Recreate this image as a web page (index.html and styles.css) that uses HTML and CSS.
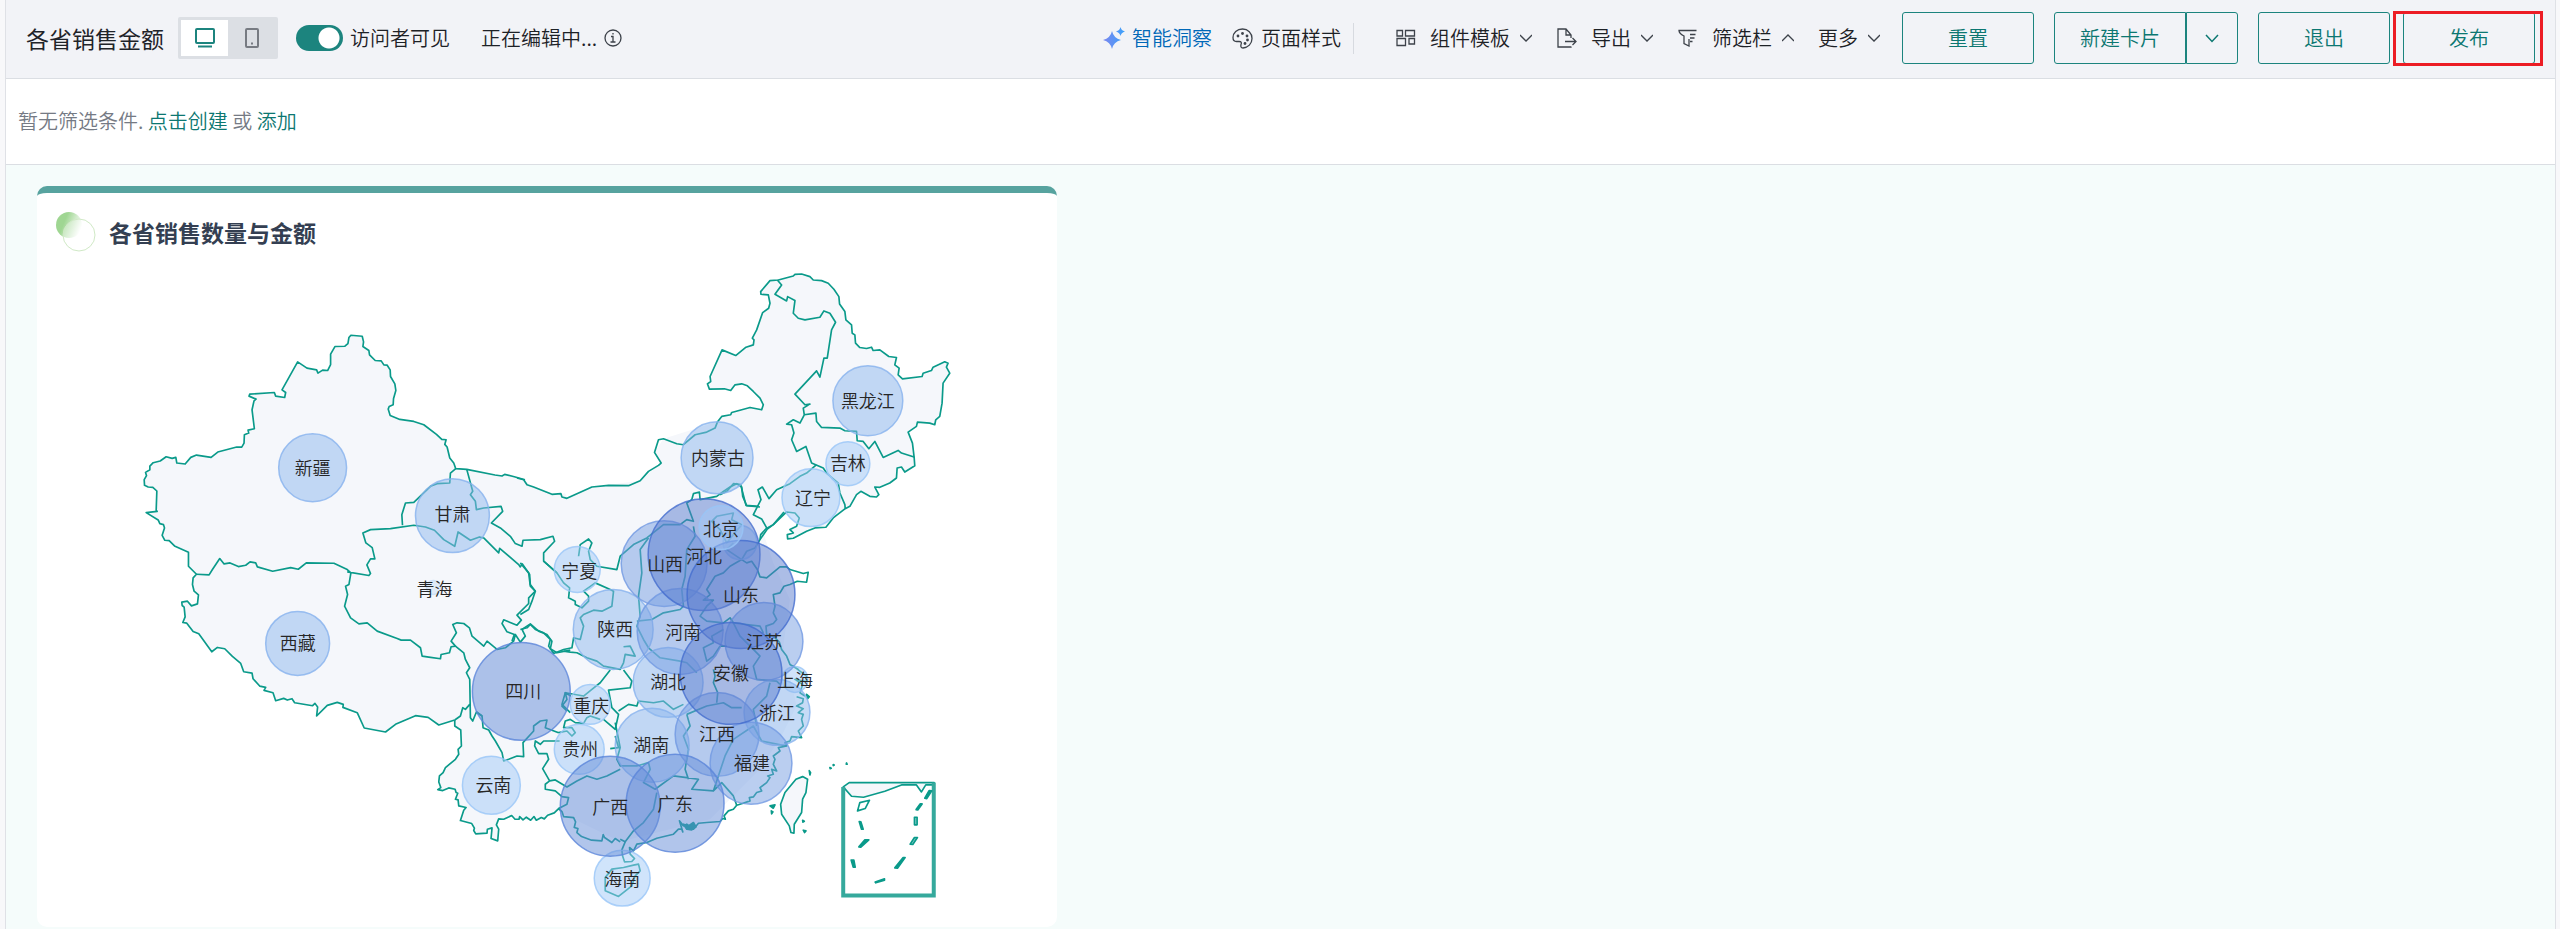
FILE: index.html
```html
<!DOCTYPE html>
<html lang="zh-CN">
<head>
<meta charset="utf-8">
<title>各省销售金额</title>
<link rel="stylesheet" href="styles.css">
</head>
<body>
<div class="page">
  <header class="topbar">
    <h1 class="page-title">各省销售金额</h1>
    <div class="device-switch">
      <button class="device device-active" type="button" aria-label="桌面端">
        <svg width="20" height="20" viewBox="0 0 20 20"><rect x="1" y="1" width="18" height="14" rx="1"/><path d="M3 18.500H17"/></svg>
      </button>
      <button class="device" type="button" aria-label="移动端">
        <svg width="20" height="20" viewBox="0 0 20 20"><rect x="4" y="1" width="12" height="18" rx="1"/><path d="M9 15.500H11"/></svg>
      </button>
    </div>
    <label class="visible-toggle"><input class="switch" type="checkbox" checked><span>访问者可见</span></label>
    <div class="editing"><span>正在编辑中...</span>
      <svg class="icon" width="18" height="18" viewBox="0 0 18 18"><circle cx="9" cy="9" r="8"/><path d="M7 7.500H9V13M6.500 13H11.500M9 4V5.500"/></svg>
    </div>
    <nav class="tools">
      <button class="tool tool-smart" type="button">
        <svg width="22" height="22" viewBox="0 0 22 22"><defs><linearGradient id="spark" x1="0" x2="1"><stop offset="0" stop-color="#7c86ee"/><stop offset="1" stop-color="#3ba2fb"/></linearGradient></defs><path fill="url(#spark)" d="M9 4Q10.500 11 18 13Q10.500 15 9 22Q7.500 15 0 13Q7.500 11 9 4ZM17.500 0Q18.200 3.500 22 4.500Q18.200 5.500 17.500 9Q16.800 5.500 13 4.500Q16.800 3.500 17.500 0Z"/></svg>
        <span>智能洞察</span>
      </button>
      <button class="tool tool-style" type="button">
        <svg class="icon" width="21" height="21" viewBox="0 0 21 21"><path d="M11 20C16 19.500 20 16 20 10.500C20 5 16 1 10.500 1C5 1 1 5 1 9.500C1 12 2.500 13.500 4.500 13.500H7C9.500 13.500 9.800 14.500 9 16.500C8.500 18.500 9 20 11 20Z"/><g class="dots"><circle cx="6" cy="8" r="1.400"/><circle cx="10.500" cy="5.500" r="1.400"/><circle cx="15" cy="8" r="1.400"/><circle cx="15.500" cy="12" r="1.400"/><circle cx="13" cy="15.500" r="1.400"/></g></svg>
        <span>页面样式</span>
      </button>
      <i class="divider"></i>
      <button class="tool" type="button">
        <svg class="icon icon-wide" width="20" height="18" viewBox="0 0 20 18"><path d="M1 1.500H6.500V7H1ZM9.500 1.500H18.500V7H9.500ZM1 9.500H9.500V16.500H1ZM13 9.500H18.500V15H13Z"/></svg>
        <span>组件模板</span>
        <svg class="icon chevron" width="12" height="8" viewBox="0 0 12 8"><path d="M0 1L6 7L12 1"/></svg>
      </button>
      <button class="tool" type="button">
        <svg class="icon icon-wide" width="20" height="20" viewBox="0 0 20 20"><path d="M14 18.500V19H1V1H9L14 7V10M9 1V7H14M8 13.500H19M15.500 10L19 13.500L15.500 17"/></svg>
        <span>导出</span>
        <svg class="icon chevron" width="12" height="8" viewBox="0 0 12 8"><path d="M0 1L6 7L12 1"/></svg>
      </button>
      <button class="tool" type="button">
        <svg class="icon icon-wide" width="20" height="18" viewBox="0 0 20 18"><path d="M18.500 1.500H1Q1 4.500 6 7V14.500L11 17V10M12 5.500H17.500M12 9H16.500M12 12.500H14.500"/></svg>
        <span>筛选栏</span>
        <svg class="icon chevron" width="12" height="8" viewBox="0 0 12 8"><path d="M0 7L6 1L12 7"/></svg>
      </button>
      <button class="tool" type="button">
        <span>更多</span>
        <svg class="icon chevron" width="12" height="8" viewBox="0 0 12 8"><path d="M0 1L6 7L12 1"/></svg>
      </button>
    </nav>
    <div class="actions">
      <button class="btn" type="button">重置</button>
      <div class="split">
        <button class="btn btn-main" type="button">新建卡片</button>
        <button class="btn btn-drop" type="button" aria-label="展开"><svg width="14" height="9" viewBox="0 0 14 9"><path d="M1 1L7 7.500L13 1"/></svg></button>
      </div>
      <button class="btn" type="button">退出</button>
      <div class="publish"><button class="btn" type="button">发布</button></div>
    </div>
  </header>
  <section class="filters">暂无筛选条件. <a href="#create">点击创建</a> 或 <a href="#add">添加</a></section>
  <main class="canvas">
    <article class="card">
      <div class="card-head">
        <svg width="40" height="42" viewBox="0 0 40 42"><defs><linearGradient id="leaf" x1="0" y1="0.300" x2="1" y2="0.700"><stop offset="0.300" stop-color="#9fd692"/><stop offset="0.950" stop-color="#fff"/></linearGradient></defs><circle cx="13" cy="14" r="13" fill="url(#leaf)"/><circle cx="23" cy="24" r="16" fill="#fff" fill-opacity="0.350" stroke="#d0e9c6"/></svg>
        <h2>各省销售数量与金额</h2>
      </div>
      <svg class="map" viewBox="36 256 1021 672" role="img" aria-label="各省销售数量与金额">
        <g transform="scale(0.333333)">
          <g class="land">
            <g transform="translate(390 960)">
              <path d="M1320 533L1310 532 1304 520 1293 525 1262 523 1198 497 1184 480 1152 471 1123 464 1115 469 1094 466 1009 449 976 447 970 430 958 415 950 382 943 374 947 360 934 359 918 344 880 315 850 305 808 299 779 287 773 268 776 260 788 255 789 237 796 212 793 192 780 170 779 150 770 136 760 135 752 123 734 122 717 105 715 92 697 80 699 66 695 49 661 46 655 53 652 71 643 79 613 80 600 103 600 134 591 152 576 151 562 160 558 150 529 145 501 126 454 210 465 218 462 233 435 229 431 218 357 223 355 229 376 238 364 270 371 327 352 331 354 340 341 345 340 370 333 382 318 382 261 397 241 413 197 406 180 413 163 433 138 430 135 413 124 416 106 411 88 424 67 429 57 439 57 450 44 458 47 468 40 480 41 497 52 502 66 503 78 514 76 572 79 575 46 579 82 601 87 612 98 615 101 625 94 647 102 662 115 663 131 679 173 698 173 740 197 764 187 775 185 795 190 815 203 826 200 853 182 859 170 845 153 848 154 858 160 863 163 892 156 909 168 911 187 936 204 943 243 997 260 984 282 988 305 1011 330 1032 339 1057 364 1061 367 1078 387 1100 405 1104 400 1113 427 1120 435 1144 459 1137 470 1142 484 1138 492 1150 546 1159 553 1152 561 1163 558 1190 590 1158 620 1149 638 1155 637 1164 680 1180 701 1226 765 1238 795 1215 855 1189 893 1194 925 1217 973 1202 1300 1100 1600 900 1600 533Z"/>
              <path d="M1310 536L1385 502 1530 483 1593 430 1573 398 1600 357 1760 307 1870 310 1960 560 1900 640 1930 730 1980 840 1960 980 2000 1160 1950 1260 1880 1360 1740 1500 1470 1568 1290 1480 973 1202 1000 900Z"/>
            </g>
            <path transform="translate(1260 1800)" d="M103 362L103 380 121 392 123 440 113 450 115 465 105 480 75 505 68 520 57 530 55 548 61 565 52 571 67 574 85 566 104 570 107 580 105 600 113 602 115 620 137 625 120 664 154 673 162 687 166 704 200 702 201 690 215 686 212 718 232 725 235 690 228 677 235 659 250 660 274 649 284 660 308 662 331 663 348 663 372 659 402 641 415 628 600 500Z"/>
            <path transform="translate(2070 780)" d="M232 805L250 795 290 757 315 760 328 775 320 800 300 810 310 820 292 825 293 838 310 836 350 815 375 805 408 803 430 775 466 747 480 740 500 705 513 695 540 710 560 712 567 705 555 682 570 683 600 670 620 655 622 625 635 622 645 637 675 618 673 592 668 550 655 517 680 500 683 487 720 490 735 495 738 480 750 470 757 430 760 370 780 340 770 322 775 310 765 306 730 322 725 332 700 340 697 350 638 357 625 345 628 325 615 315 620 293 597 290 570 270 550 272 545 262 530 266 510 263 497 250 495 225 487 220 485 195 468 180 465 155 449 132 447 110 432 88 415 70 395 62 370 60 360 50 335 42 315 43 310 48 265 60 240 62 212 95 213 103 235 105 240 130 236 145 218 158 200 210 187 235 192 240 190 255 168 262 137 287 96 270 60 350 62 365 52 372 58 388 103 387 122 392 135 375 155 372 172 378 190 395 210 415 220 435 215 450 180 443 125 458 122 465 95 470 82 487 70 515 15 525 -20 555 0 720 150 900Z"/>
          </g>
          <g class="edge">
            <g transform="translate(390 960)">
              <path d="M1184 480L1152 471 1123 464 1115 469 1094 466 1009 449 976 447 970 430 958 415 950 382 943 374 947 360 934 359 918 344 880 315 850 305 808 299 779 287 773 268 776 260 788 255 789 237 796 212 793 192 780 170 779 150 770 136 760 135 752 123 734 122 717 105 715 92 697 80 699 66 695 49 661 46 655 53 652 71 643 79 613 80 600 103 600 134 591 152 576 151 562 160 558 150 529 145 501 126 454 210 465 218 462 233 435 229 431 218 357 223 355 229 376 238 370 243 364 270 371 327 352 331 354 340 341 345 340 370 333 382 318 382 261 397 241 413 197 406 180 413 163 433 138 430 135 413 124 416 106 411 88 424 67 429 57 439 57 450 44 458 47 468 40 480 41 497 52 502 66 503 78 514 76 572 79 575 46 579 82 601 87 612 98 615 101 625 94 647 102 662 115 663 131 679 173 698 173 740 197 764 187 775 185 795 190 815 203 826 200 853 182 859 170 845 153 848 154 858 160 863 163 892 156 909 168 911 187 936 204 943 243 997 260 984 282 988 305 1011 330 1032 339 1057 364 1061 367 1078 387 1100 405 1104 400 1113 427 1120 435 1144 459 1137 470 1142 484 1138 492 1150 546 1159 553 1152 561 1163 558 1190 590 1158 620 1149 638 1155 637 1164 680 1180 701 1226 765 1238 795 1215 855 1189 893 1194 925 1217 973 1202"/>
              <path d="M197 764L235 766 245 750 267 717 280 733 298 730 323 741 345 737 358 727 375 730 380 742 426 755 480 744 503 749 527 730 610 731 650 750 661 760M650 757L715 768 720 762 709 736 720 718 733 718 725 684 706 670 697 640 720 630 780 627 850 617 885 622 912 632 940 660 973 680 983 637 1020 662 1047 652 1060 655 1105 700 1108 686 1165 735 1170 742 1176 733 1198 765 1200 795 1215 815 1195 835 1195 852 1160 887 1173 902 1160 917 1120 901 1115 912 1130 937 1152 945 1145 965"/>
              <path d="M816 617L814 585 825 550 850 548 900 500 920 492 958 490 960 460 976 447M1009 449L1027 515 1020 525 1035 545 1038 570 1060 565 1112 560 1117 575 1083 610 1110 625 1140 650 1155 672 1175 680 1178 662 1230 660 1268 650 1273 665 1240 700 1240 725 1280 760"/>
              <path d="M661 760L655 795 645 800 651 825 642 860 660 895 685 913 710 910 740 935 800 957 812 962 840 962 870 985 875 1010 895 1013 930 1018 932 1005 957 1000 962 982 975 980 962 965 978 940 967 915 980 910 1000 912 1017 925 1025 950 1060 980 1070 965 1100 990 1125 985 1150 965 1155 945 1170 968 1185 950 1175 930 1200 913 1225 935 1250 945 1265 965 1260 988 1280 1000 1320 992"/>
              <path d="M975 980L1000 1000 1005 1020 1018 1045 1008 1060 1018 1080 1020 1195 1027 1205 1038 1178 1055 1190M1018 1155L1005 1170 997 1165 990 1190 973 1202"/>
            </g>
            <g transform="translate(1260 1800)">
              <path d="M103 362L103 380 121 392 123 440 113 450 115 465 105 480 75 505 68 520 57 530 55 548 61 565 52 571 67 574 85 566 104 570 107 580 112 582 105 600 113 602 115 620 137 625 130 633 120 664 154 673 162 687 160 694 166 704 200 702 201 690 215 686 212 718 232 725 235 690 228 677 235 659 250 660 274 649 284 660 296 660 298 652 308 662 318 654 331 663 341 652 348 663 363 655 372 659 382 648 402 641 415 628 425 637 430 652 460 655 466 668 462 685 473 688 470 700 484 712 514 723 545 725 549 706 553 715 575 730 585 718 600 728"/>
              <path d="M168 338L185 350 188 385 205 392 215 410 225 425 245 460 250 485 265 480 290 470 310 472 308 430 340 395 340 380 360 365 380 362 375 385 415 400M452 290L435 280 440 300 425 320 440 335M415 400L440 395 455 410 465 400 455 385 430 385 435 365 450 360 465 370 490 372 500 355 510 350 540 360M418 425L370 425 360 435 345 425 343 440 355 463 380 463 385 480 367 508 388 545 375 555 375 570 405 575 425 592 445 595 440 615 415 628M388 545L405 542 440 563 470 545 500 530 530 540 560 530 600 510"/>
            </g>
            <g transform="translate(1560 1200)">
              <path d="M592 67L585 85 560 97 525 105 490 135 470 132 430 117 415 120 403 158 423 190 415 197 385 215 360 243 325 258 265 257 215 262 140 296 125 292 122 282 95 284 40 262 20 255 10 240 -10 235"/>
              <path d="M70 485L110 520 130 550 148 565 145 595 165 605 165 615 185 625 205 605 205 590 190 575 225 550 270 570 280 575 275 620 245 635 220 632 190 645 180 655 190 680 180 720 160 715 155 745 130 750 100 762 85 740 90 720 70 700 45 690 30 675 20 685 0 690M175 470L180 435 205 418 215 430 205 455 210 480 230 500 290 510 300 470 340 435 380 415 430 375 480 375 500 360 520 365 500 310 515 300 520 282 538 277 540 300 590 290 610 275 630 262 650 252 665 262 668 290 680 318 720 322"/>
              <path d="M0 490L25 520 30 560 45 575 35 605 25 630 0 645M130 755L150 758 170 760 200 775 230 785 250 800 300 810 310 790 315 765 345 770 330 740 310 742M270 812L240 850 215 870 190 890 135 880 125 915 150 940M310 812L335 845 330 865 265 872 275 925 295 945 285 990 250 960M295 935L325 915 350 920 355 905 400 910 430 905 460 930 490 915M385 415L360 450 365 520 355 590 360 650 350 680 370 720 385 745 420 775 480 785 500 790 530 820M520 380L525 410 500 450 495 530 485 570 490 620M350 665L395 660 430 640 480 630 490 620"/>
            </g>
            <g transform="translate(1680 1440)">
              <path d="M735 650L720 640 728 615 705 600 740 607 740 590 700 560 715 570 690 555 680 530 665 510 658 488 640 470 620 465 618 440 640 432 650 420 640 400 645 380 640 345 660 340 672 320 690 315 712 305 740 308 745 278 730 282 690 270 680 262 660 262 620 295 600 292 592 270 575 245 560 250 545 240 560 215 585 205 600 180 622 148 640 135 672 97"/>
              <path d="M545 240L510 260 490 280 465 290 440 330 450 345 430 362 460 362 440 380 420 410 440 425 490 430 510 415 520 430 560 435 600 440 610 460M490 450L455 470 460 490 430 505 440 545 460 530 480 500 500 500M460 570L465 590 460 610 473 640 470 670M520 430L540 470 580 510 600 530 580 560 590 600 650 605 660 615M455 125L470 110 520 100 515 120 545 135 520 165 500 190 480 150ZM520 190L500 210 545 240"/>
            </g>
            <g transform="translate(2070 780)">
              <path d="M232 805L250 795 290 757 315 760 328 775 320 800 300 810 310 820 292 825 293 838 310 836 350 815 375 805 408 803 430 775 466 747 480 740 500 705 513 695 540 710 560 712 567 705 555 682 570 683 600 670 620 655 622 625 635 622 645 637 675 618 673 592 668 550 655 517 680 500 683 487 720 490 735 495 738 480 750 470 757 430 760 370 780 340 770 322 775 310 765 306 730 322 725 332 700 340 697 350 638 357 625 345 628 325 615 315 620 293 597 290 570 270 550 272 545 262 530 266 510 263 497 250 495 225 487 220 485 195 468 180 465 155 449 132 447 110 432 88 415 70 395 62 370 60 360 50 335 42 315 43 310 48 265 60 240 62 212 95 213 103 235 105 240 130 236 145 218 158 200 210 187 235 192 240 190 255 168 262 137 287 96 270 60 350 62 365 52 372 58 388 103 387 122 392 135 375 155 372 172 378 190 395 210 415 220 435 215 450 180 443 125 458 122 465 95 470 82 487"/>
              <path d="M262 60L275 75 255 103 290 123 293 110 315 122 310 160 325 175 345 180 390 172 402 153 420 160 437 187 425 210 412 295 402 295 390 352 380 333 315 403 345 435 360 433 340 445 343 465 378 460 380 485 395 503 450 505 465 513 500 515 502 543 520 545 537 567 555 545 580 593 625 572 635 580 673 592M343 465L330 490 310 480 290 493 305 495 312 520 305 540 320 575 348 560 365 610 400 625 410 640 445 670 450 700 465 735 466 747M380 615L350 640 330 650 300 672 260 690 237 717 217 682 204 690 213 720 190 765 215 778 230 805 212 825 210 840M205 740L168 737 152 675 130 672 110 695 90 705"/>
            </g>
            <g transform="translate(1620 1980)">
              <path d="M240 540L255 548 245 572 247 590 253 608 275 607 283 598 270 585 268 565 280 575 290 555 320 550 350 537 400 525 415 510 425 510 428 518 418 485 430 500 440 495 460 510 475 492 500 490 540 487 548 478 556 480 552 470 565 455 580 450 590 438 607 433 630 425 628 415 640 413 650 400 665 395 660 385 680 370 690 355 683 350 700 345 695 330 710 335 700 315 705 300 700 290 720 275 715 265 740 260 735 250 750 245 755 232 785 235 775 215 790 200 785 180 790 165 775 160 790 148 770 140 788 130 790 118 770 112"/>
              <path d="M440 165L500 140 550 130 575 145 605 145M440 165L450 200 430 230 445 270 435 330 445 360M225 190L240 265 230 300 240 320 290 320 325 310 330 330 310 370 345 390 400 350 440 355 475 360 455 390 520 395 555 290 580 240 640 200 665 245 740 260M520 395L545 370 580 410 590 438M650 200L640 150 680 110 690 70M350 400L340 450 310 490 280 515 255 548M225 230L235 265 210 268"/>
              <path class="filled" d="M430 495L445 500 460 490 468 503 455 512 440 510ZM800 105L808 112 803 118ZM690 440L705 437 700 447ZM694 455L699 458 695 464ZM788 483L793 486 789 489ZM790 513L798 515 794 520ZM808 334L812 340 810 347ZM870 325L874 327 871 328ZM880 316L883 317 880 319ZM920 311L922 315 919 315Z"/>
              <path class="island" d="M788 352L803 360 798 400 788 420 785 460 763 495 762 522 753 520 748 500 725 465 722 435 735 400 768 360ZM195 655L215 630 250 625 280 618 295 615 300 635 285 650 275 680 235 712 195 695Z"/>
            </g>
            <g transform="translate(2460 2220)">
              <path class="island" d="M70 143L95 171 131 174 195 156 245 137 290 137 305 158 318 137 343 137 343 130 88 130Z"/>
              <path class="frame" d="M70 143V469H342V130"/>
              <path d="M120 190L149 183 136 208 113 215Z"/>
              <path class="filled" d="M118 247L123 248 130 270 125 270ZM117 323L135 302 147 302 123 324ZM94 363L102 363 106 384 100 384ZM166 429L194 419 194 423 168 431ZM225 386L250 355 256 355 233 387ZM289 211L301 194 307 194 294 212ZM315 177L328 154 336 155 321 178Z"/>
              <path class="light" d="M284 234H292V257H284ZM271 315L284 295 293 295 279 316Z"/>
            </g>
          </g>
        </g>
        <g class="bubbles">
          <g class="b1"><circle cx="433" cy="588" r="7" opacity="0.500"/><circle cx="577" cy="570" r="23"/><circle cx="740" cy="543" r="17"/><circle cx="590" cy="705" r="20"/><circle cx="795" cy="680" r="13"/><circle cx="579" cy="750" r="25"/><circle cx="622" cy="879" r="28"/><circle cx="491" cy="786" r="29"/><circle cx="811" cy="498" r="29"/><circle cx="848" cy="464" r="22"/></g>
          <g class="b2"><circle cx="312" cy="468" r="34"/><circle cx="297" cy="644" r="32"/><circle cx="452" cy="516" r="37"/><circle cx="717" cy="458" r="36"/><circle cx="868" cy="401" r="35"/><circle cx="613" cy="630" r="40"/><circle cx="668" cy="683" r="35"/><circle cx="652" cy="746" r="37"/><circle cx="777" cy="713" r="33"/></g>
          <g class="b3"><circle cx="664" cy="564" r="43"/><circle cx="680" cy="632" r="43"/><circle cx="764" cy="642" r="39"/><circle cx="717" cy="735" r="42"/><circle cx="751" cy="764" r="41"/></g>
          <g class="b4"><circle cx="521" cy="692" r="49"/><circle cx="610" cy="807" r="50"/><circle cx="675" cy="804" r="49"/></g>
          <g class="b5"><circle cx="704" cy="555" r="56"/><circle cx="741" cy="595" r="54"/><circle cx="731" cy="674" r="51"/></g>
          <g class="b1"><circle cx="721" cy="528" r="22"/></g>
        </g>
        <g class="names">
          <text x="312" y="475">新疆</text><text x="297" y="651">西藏</text><text x="452" y="521">甘肃</text><text x="434" y="596">青海</text><text x="523" y="699">四川</text><text x="718" y="465">内蒙古</text><text x="579" y="578">宁夏</text><text x="721" y="536">北京</text><text x="704" y="563">河北</text><text x="665" y="571">山西</text><text x="741" y="602">山东</text><text x="615" y="637">陕西</text><text x="683" y="640">河南</text><text x="764" y="650">江苏</text><text x="731" y="681">安徽</text><text x="668" y="690">湖北</text><text x="591" y="714">重庆</text><text x="795" y="688">上海</text><text x="777" y="721">浙江</text><text x="717" y="742">江西</text><text x="752" y="771">福建</text><text x="651" y="753">湖南</text><text x="580" y="757">贵州</text><text x="610" y="815">广西</text><text x="675" y="812">广东</text><text x="622" y="887">海南</text><text x="493" y="793">云南</text><text x="813" y="505">辽宁</text><text x="848" y="470">吉林</text><text x="868" y="408">黑龙江</text>
        </g>
      </svg>
    </article>
  </main>
</div>
</body>
</html>
```
FILE: styles.css
```css
* { box-sizing: border-box; }
body {
  margin: 0;
  background: #f8f8fa;
  color: #1d2126;
  font: 350 20px/28px "Noto Sans CJK SC", sans-serif;
}
button { font: inherit; color: inherit; background: none; border: 0; padding: 0; }
svg { display: block; flex: none; }
.page {
  display: flex;
  flex-direction: column;
  min-height: 100vh;
  margin: 0 4px 0 5px;
  border: solid #dfe1e6;
  border-width: 0 1px;
}
.topbar {
  display: flex;
  align-items: center;
  height: 79px;
  padding: 0 12px 2px 20px;
  background: #f2f3f7;
  border-bottom: 1px solid #dbdee3;
  white-space: nowrap;
}
.page-title { margin: 0 14px 0 0; font-size: 23px; font-weight: 400; color: #1f2329; }
.device-switch { display: flex; padding: 3px; border-radius: 2px; background: #dcdfe4; }
.device { display: grid; place-items: center; width: 47px; height: 36px; color: #777b82; }
.device svg { fill: none; stroke: currentColor; stroke-width: 2; }
.device-active { background: #fff; color: #1c847e; }
.visible-toggle { display: flex; align-items: center; gap: 7px; margin-left: 18px; }
.switch {
  appearance: none;
  width: 47px;
  height: 26px;
  margin: 0;
  border-radius: 13px;
  background: radial-gradient(circle at 33px 13px, #fff 10px, #1c847e 11px);
}
.editing { display: flex; align-items: center; gap: 7px; margin-left: 31px; }
.icon { fill: none; stroke: #3d424a; stroke-width: 1.3; }
.icon .dots { fill: #3d424a; stroke: none; }
.tools { display: flex; align-items: center; margin-left: auto; }
.tool { display: flex; align-items: center; margin-right: 25px; }
.tool-smart { gap: 7px; margin-right: 20px; color: #0068b8; }
.tool-style { gap: 8px; margin-right: 12px; }
.divider { width: 1px; height: 31px; margin-right: 42px; background: #d7dae0; }
.icon-wide { margin-right: 14px; }
.chevron { margin-left: 10px; }
.tool:last-child { margin-right: 22px; }
.tool:nth-last-child(2) { margin-right: 24px; }
.actions { display: flex; align-items: center; gap: 20px; }
.btn { width: 132px; height: 52px; border: 1px solid #1c847e; border-radius: 3px; color: #0c7771; }
.split { display: flex; }
.btn-main { border-radius: 3px 0 0 3px; }
.btn-drop { display: grid; place-items: center; width: 52px; border-radius: 0 3px 3px 0; }
.btn-drop svg { fill: none; stroke: currentColor; stroke-width: 1.5; }
.publish { position: relative; margin-left: -7px; margin-right: 8px; }
.publish::after {
  content: "";
  position: absolute;
  inset: -1px -8px -2px -10px;
  border: 3px solid #ec1c24;
  pointer-events: none;
}
.filters {
  height: 86px;
  padding: 28px 12px;
  background: #fff;
  border-bottom: 1px solid #dbdee3;
  color: #757a84;
}
.filters a { color: #0c7771; text-decoration: none; }
.canvas { flex: 1; padding-top: 21px; background: #f5fcfb; }
.card {
  width: 40%;
  margin-left: 31px;
  overflow: hidden;
  border-top: 7px solid #57a39f;
  border-radius: 10px;
  background: #fff;
}
.card-head { display: flex; align-items: center; gap: 13px; height: 63px; padding: 18px 20px 3px 19px; }
.card-head h2 { margin: 0; font-size: 23px; font-weight: 700; color: #343f52; }
.map { width: 100%; height: auto; }
.land { fill: #f5f7fb; }
.edge { fill: none; stroke: #0a9a8a; stroke-width: 5; stroke-linejoin: round; }
.edge .filled { fill: #0a9a8a; }
.edge .island { fill: #f5f7fb; }
.edge .light { fill: #86cfc7; }
.edge .frame { stroke-width: 12; stroke: #35a99c; stroke-linejoin: miter; }
.bubbles { fill-opacity: 0.5; stroke-opacity: 0.8; stroke-width: 1.5; }
.b1 { fill: #a1c9f7; stroke: #98c6f8; }
.b2 { fill: #8db7ed; stroke: #86b1ee; }
.b3 { fill: #759de1; stroke: #7099e2; }
.b4 { fill: #638bd7; stroke: #5a84d9; }
.b5 { fill: #597bcd; stroke: #446dce; }
.names { fill: #262626; font-size: 18px; font-weight: 350; text-anchor: middle; }
```
